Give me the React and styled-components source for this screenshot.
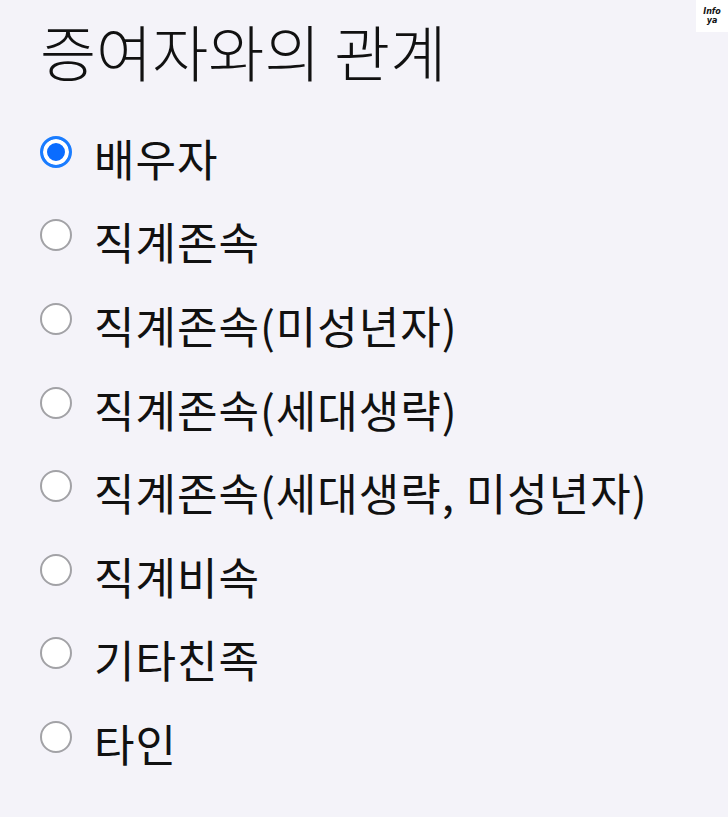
import React, { useState } from 'react'
import styled, { createGlobalStyle } from 'styled-components'

const GlobalStyle = createGlobalStyle`
  body {
    margin: 0;
    background: #f4f3f9;
    font-family: "Noto Sans CJK KR", "Noto Sans", sans-serif;
    color: #111;
  }
`;
const Page = styled.div`
  min-height: 817px;
  padding: 12px 0 0 40px;
  box-sizing: border-box;
`;
const Badge = styled.div`
  position: absolute;
  top: 0;
  right: 0;
  width: 32px;
  height: 32px;
  background: white;
  display: flex;
  flex-direction: column;
  align-items: center;
  justify-content: center;
  font-family: "DejaVu Sans", sans-serif;
  font-style: italic;
  font-weight: bold;
  font-size: 8px;
  line-height: 9px;
`;
const Title = styled.h1`
  margin: 0 0 26px;
  font-size: 61px;
  font-weight: 300;
  line-height: 78px;
`;
const List = styled.div`
  display: flex;
  flex-direction: column;
`;
const Option = styled.label`
  display: flex;
  align-items: center;
  height: 83.6px;
  font-size: 44px;
  font-weight: 400;
  letter-spacing: 1px;
  cursor: pointer;
`;
const Radio = styled.input`
  appearance: none;
  box-sizing: border-box;
  flex: none;
  width: 32px;
  height: 32px;
  margin: -12px 22px 0 0;
  border-radius: 50%;
  border: 2px solid #a2a2a6;
  background: #fff;
  &:checked {
    border: 3px solid #1a7cff;
    background: #0a6cff;
    box-shadow: inset 0 0 0 4px #fff;
  }
`;

const options = [
  '배우자',
  '직계존속',
  '직계존속(미성년자)',
  '직계존속(세대생략)',
  '직계존속(세대생략, 미성년자)',
  '직계비속',
  '기타친족',
  '타인',
];

const App = () => {
  const [selected, setSelected] = useState(0);
  return (
    <Page>
      <GlobalStyle />
      <Badge><span>Info</span><span>ya</span></Badge>
      <Title>증여자와의 관계</Title>
      <List>
        {options.map((o, i) => (
          <Option key={i}>
            <Radio type="radio" name="rel" checked={selected === i} onChange={() => setSelected(i)} />
            {o}
          </Option>
        ))}
      </List>
    </Page>
  )
}

export default App
